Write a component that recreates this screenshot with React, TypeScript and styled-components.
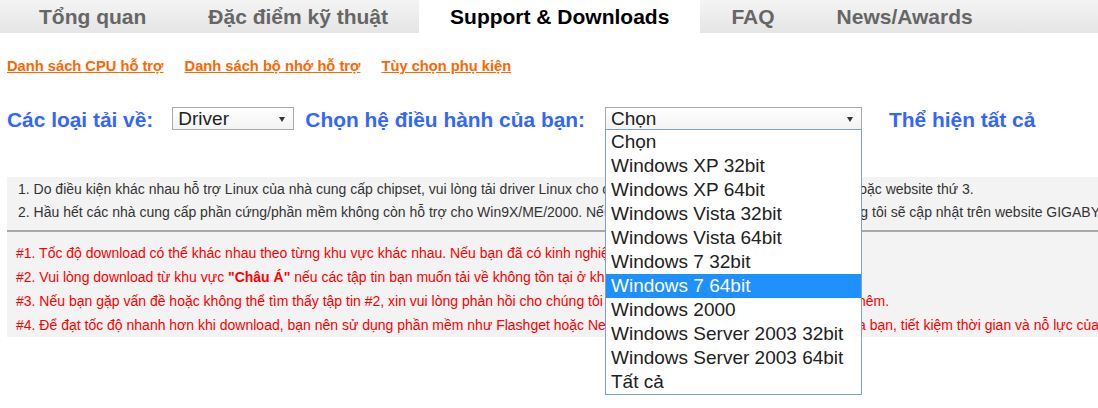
import React from "react";
import styled, { createGlobalStyle } from "styled-components";

const GlobalStyle = createGlobalStyle`
    body {
        margin: 0;
        background: #fff;
        font-family: "Liberation Sans", Arial, sans-serif;
    }
`

const Page = styled.div`
    width: 1098px;
    height: 408px;
    overflow: hidden;
    position: relative;
`

const TabBar = styled.div`
    display: flex;
    height: 33px;
    padding-left: 8px;
    background: linear-gradient(#f4f4f4, #e5e5e5);
`

const Tab = styled.div<{ $active?: boolean }>`
    padding: 0 31px;
    line-height: 33px;
    font-size: 21px;
    font-weight: bold;
    white-space: nowrap;
    color: ${p => (p.$active ? "#000" : "#666")};
    background: ${p => (p.$active ? "#fff" : "transparent")};
`

const LinkBar = styled.div`
    display: flex;
    gap: 21px;
    margin-top: 24px;
    padding-left: 7px;
    line-height: 18px;
`

const OrangeLink = styled.a`
    font-size: 14.7px;
    font-weight: bold;
    color: #ff6600;
    text-decoration: underline;
    cursor: pointer;
`

const FilterRow = styled.div`
    display: flex;
    align-items: center;
    height: 23px;
    margin-top: 32px;
    padding-left: 7px;
`

const Label = styled.span<{ $gap: number }>`
    font-size: 20.9px;
    font-weight: bold;
    color: #3366ff;
    white-space: nowrap;
    margin-right: ${p => p.$gap}px;
    padding-top: 2px;
`

const SelectWrap = styled.div<{ $width: number; $gap: number }>`
    position: relative;
    width: ${p => p.$width}px;
    margin-right: ${p => p.$gap}px;
`

const SelectBox = styled.div`
    position: relative;
    box-sizing: border-box;
    height: 23px;
    padding-left: 5px;
    border: 1px solid #a9a9a9;
    background: linear-gradient(#ffffff, #f3f3f3);
    font-size: 19px;
    line-height: 21px;
    color: #222;

    &::after {
        content: "";
        position: absolute;
        right: 8px;
        top: 9px;
        border-left: 3.5px solid transparent;
        border-right: 3.5px solid transparent;
        border-top: 5px solid #333;
    }
`

const DropList = styled.ul`
    position: absolute;
    top: 22px;
    left: 0;
    right: 0;
    margin: 0;
    padding: 0;
    list-style: none;
    background: #fff;
    border: 1px solid #7f9fd5;
    z-index: 5;
`

const DropItem = styled.li<{ $selected?: boolean }>`
    height: 24px;
    line-height: 24px;
    padding-left: 5px;
    font-size: 19px;
    white-space: nowrap;
    color: ${p => (p.$selected ? "#fff" : "#222")};
    background: ${p => (p.$selected ? "#1e90ff" : "#fff")};
`

const NoteBox = styled.div<{ $pad: string; $color: string; $line: number }>`
    margin-left: 7px;
    padding: ${p => p.$pad};
    background: #f3f3f3;
    color: ${p => p.$color};
    font-size: 14px;
    line-height: ${p => p.$line}px;
    white-space: nowrap;
`

const InfoBox = styled(NoteBox)`
    margin-top: 47px;
    border-bottom: 2px solid #a8a8a8;
`

const Strong = styled.b`
    font-weight: bold;
`

const tabs = ["Tổng quan", "Đặc điểm kỹ thuật", "Support & Downloads", "FAQ", "News/Awards"];

const osList = [
    "Chọn",
    "Windows XP 32bit",
    "Windows XP 64bit",
    "Windows Vista 32bit",
    "Windows Vista 64bit",
    "Windows 7 32bit",
    "Windows 7 64bit",
    "Windows 2000",
    "Windows Server 2003 32bit",
    "Windows Server 2003 64bit",
    "Tất cả",
];

export default function App() {
    return (
        <Page>
            <GlobalStyle />
            <TabBar>
                {tabs.map(t => (
                    <Tab key={t} $active={t === "Support & Downloads"}>{t}</Tab>
                ))}
            </TabBar>

            <LinkBar>
                <OrangeLink>Danh sách CPU hỗ trợ</OrangeLink>
                <OrangeLink>Danh sách bộ nhớ hỗ trợ</OrangeLink>
                <OrangeLink>Tùy chọn phụ kiện</OrangeLink>
            </LinkBar>

            <FilterRow>
                <Label $gap={19}>Các loại tải về:</Label>
                <SelectWrap $width={122} $gap={11}>
                    <SelectBox>Driver</SelectBox>
                </SelectWrap>
                <Label $gap={20}>Chọn hệ điều hành của bạn:</Label>
                <SelectWrap $width={257} $gap={27}>
                    <SelectBox>Chọn</SelectBox>
                    <DropList>
                        {osList.map(os => (
                            <DropItem key={os} $selected={os === "Windows 7 64bit"}>{os}</DropItem>
                        ))}
                    </DropList>
                </SelectWrap>
                <Label $gap={0}>Thể hiện tất cả</Label>
            </FilterRow>

            <InfoBox $pad="1px 0 6px 11px" $color="#333" $line={23}>
                <div>1. Do điều kiện khác nhau hỗ trợ Linux của nhà cung cấp chipset, vui lòng tải driver Linux cho chipset từ website nhà sản xuất chipset hoặc website thứ 3.</div>
                <div>2. Hầu hết các nhà cung cấp phần cứng/phần mềm không còn hỗ trợ cho Win9X/ME/2000. Nếu có bản mới cho hệ điều hành này, chúng tôi sẽ cập nhật trên website GIGABYTE.</div>
            </InfoBox>

            <NoteBox $pad="9px 0 0 9px" $color="#ff0000" $line={24}>
                <div>#1. Tốc độ download có thể khác nhau theo từng khu vực khác nhau. Nếu bạn đã có kinh nghiệm, hãy chọn khu vực nhanh nhất.</div>
                <div>#2. Vui lòng download từ khu vực <Strong>"Châu Á"</Strong> nếu các tập tin bạn muốn tải về không tồn tại ở khu vực khác.</div>
                <div>#3. Nếu bạn gặp vấn đề hoặc không thể tìm thấy tập tin #2, xin vui lòng phản hồi cho chúng tôi để chúng tôi kiểm tra và hỗ trợ cho bạn thêm.</div>
                <div>#4. Để đạt tốc độ nhanh hơn khi download, bạn nên sử dụng phần mềm như Flashget hoặc NetAnts, để tăng tốc độ tải về các tập tin của bạn, tiết kiệm thời gian và nỗ lực của bạn.</div>
            </NoteBox>
        </Page>
    );
}
